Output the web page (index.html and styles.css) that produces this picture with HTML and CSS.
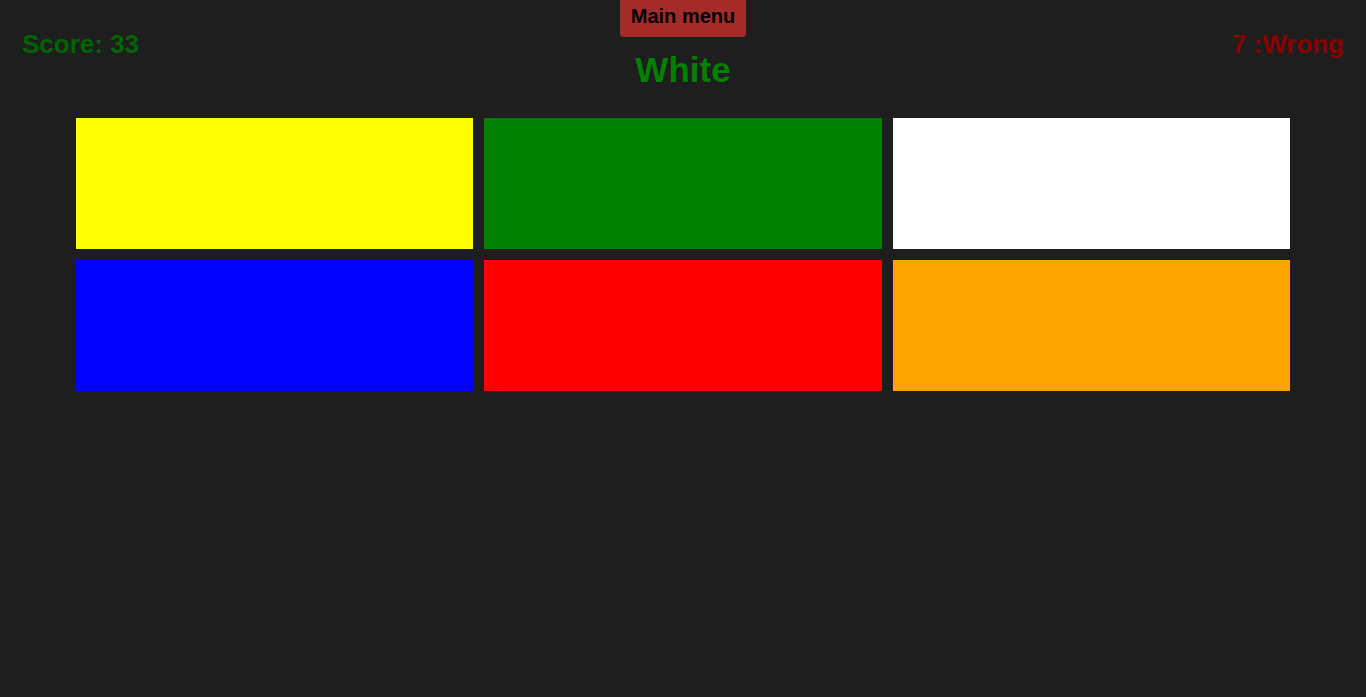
FILE: index.html
```html
<!DOCTYPE html>
<html lang="en">
<head>
<meta charset="utf-8">
<title>Color game</title>
<link rel="stylesheet" href="styles.css">
</head>
<body>
<header class="top">
  <div class="score">Score: 33</div>
  <div class="center">
    <button class="menu">Main menu</button>
    <h1 class="target">White</h1>
  </div>
  <div class="wrong">7 :Wrong</div>
</header>
<main class="grid">
  <div class="tile yellow"></div>
  <div class="tile green"></div>
  <div class="tile white"></div>
  <div class="tile blue"></div>
  <div class="tile red"></div>
  <div class="tile orange"></div>
</main>
</body>
</html>
```
FILE: styles.css
```css
html, body {
  margin: 0;
  padding: 0;
  background: #1e1e1e;
  font-family: "Liberation Sans", Arial, sans-serif;
  height: 100%;
  overflow: hidden;
}
.top {
  display: grid;
  grid-template-columns: 1fr auto 1fr;
  padding: 0 22px;
}
.score, .wrong {
  font-size: 26px;
  font-weight: bold;
  padding-top: 29px;
  line-height: 30px;
}
.score { color: #006400; justify-self: start; }
.wrong { color: #8b0000; justify-self: end; }
.center {
  display: flex;
  flex-direction: column;
  align-items: center;
}
.menu {
  font-family: "Liberation Sans", Arial, sans-serif;
  font-size: 20px;
  font-weight: bold;
  color: #000;
  background: #a52a2a;
  border: none;
  border-radius: 0 0 4px 4px;
  padding: 5px 11px 9px;
  line-height: 23px;
  white-space: nowrap;
}
.target {
  margin: 13px 0 0;
  font-size: 35px;
  line-height: 40px;
  color: #008000;
  font-weight: bold;
}
.grid {
  display: grid;
  grid-template-columns: repeat(3, 1fr);
  grid-auto-rows: 131px;
  gap: 11px;
  margin: 28px 76px 0;
}
.yellow { background: #ffff00; }
.green { background: #008000; }
.white { background: #ffffff; }
.blue { background: #0000ff; }
.red { background: #ff0000; }
.orange { background: #ffa500; }
```
